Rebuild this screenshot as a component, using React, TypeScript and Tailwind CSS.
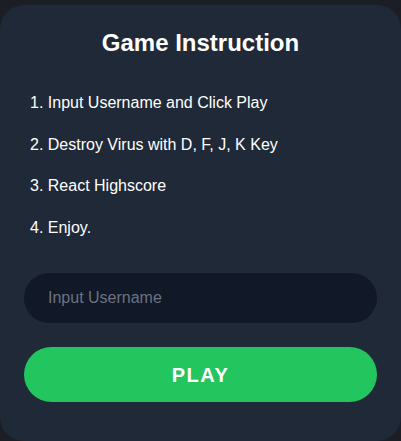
import { useState } from "react";

const steps = [
  "1. Input Username and Click Play",
  "2. Destroy Virus with D, F, J, K Key",
  "3. React Highscore",
  "4. Enjoy.",
];

export default function App() {
  const [name, setName] = useState("");

  return (
    <div className="h-[441px] w-[401px] overflow-hidden bg-[#1b1e24] pt-[5px] font-['Liberation_Sans',Arial,sans-serif]">
      <div className="flex h-[436px] flex-col rounded-3xl bg-[#1f2937] px-6 pt-[22px]">
        <h1 className="text-center text-2xl leading-8 font-bold text-white">Game Instruction</h1>
        <ol className="mt-8 flex flex-col gap-[17.5px] pl-[6px] text-base leading-6 text-white">
          {steps.map((s) => (
            <li key={s}>{s}</li>
          ))}
        </ol>
        <input
          value={name}
          onChange={(e) => setName(e.target.value)}
          placeholder="Input Username"
          className="mt-[33.5px] h-[50px] w-full rounded-full bg-[#111827] px-6 text-base text-white outline-none placeholder:text-[#6b7280]"
        />
        <button className="mt-6 h-[55px] w-full rounded-full bg-[#22c55e] text-xl font-bold tracking-[1.5px] text-white">
          PLAY
        </button>
      </div>
    </div>
  );
}
